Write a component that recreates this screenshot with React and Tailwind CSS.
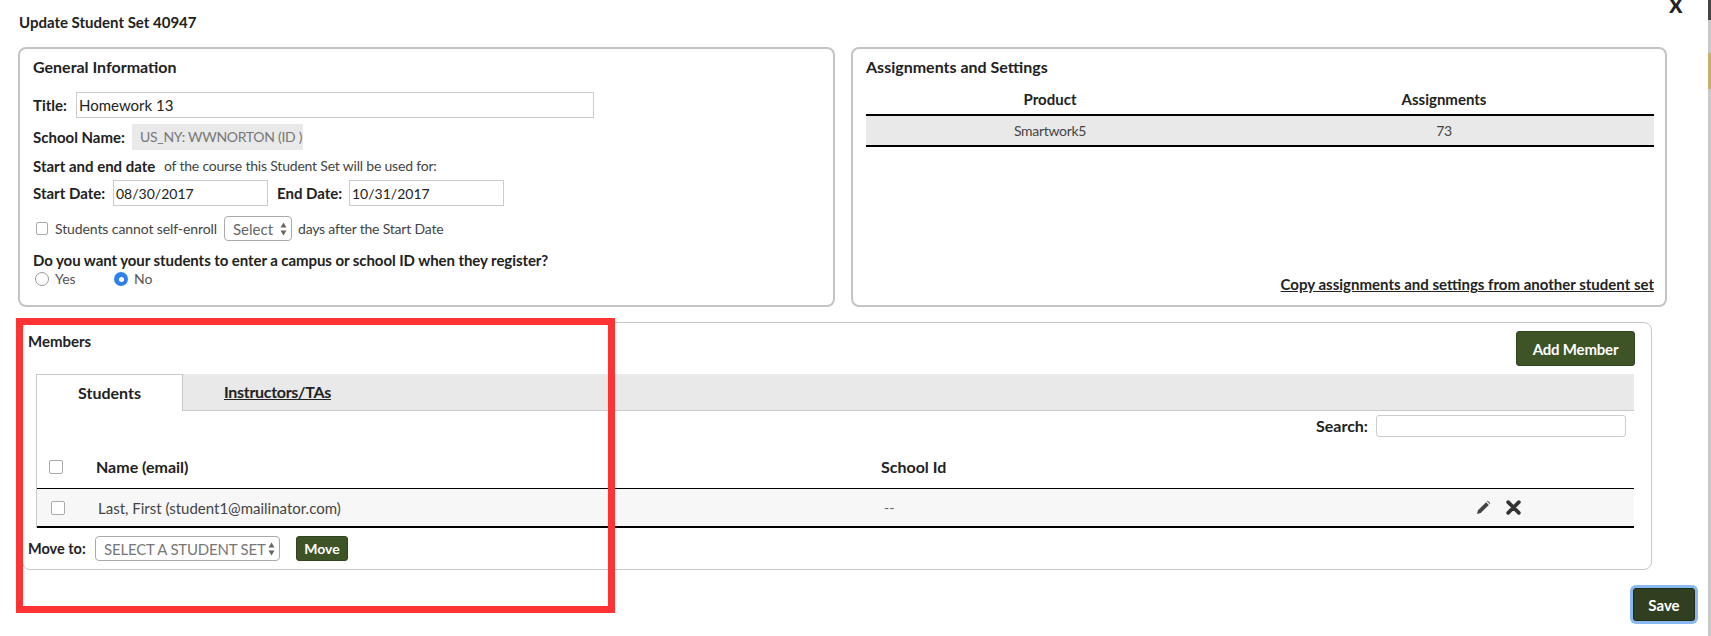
const labelCls = "font-bold text-[#222] whitespace-nowrap shrink-0";
const inputCls = "border border-[#ccc] bg-white text-[#222] px-[2px] outline-none";

function Arrows() {
  return (
    <svg width="7" height="14" viewBox="0 0 7 14" className="shrink-0">
      <path d="M3.5 0.5 L6.5 5.5 L0.5 5.5 Z M3.5 13.5 L0.5 8.5 L6.5 8.5 Z" fill="#666" />
    </svg>
  );
}

function Check({ className }) {
  return <span className={"block w-[14px] h-[14px] shrink-0 border border-[#aaa] rounded-[2px] bg-white " + (className || "")} />;
}

export default function App() {
  return (
    <div className="relative w-[1711px] h-[636px] overflow-hidden bg-white font-['Lato','Liberation_Sans',sans-serif] text-[15px] leading-[18px] text-[#333] pl-[18px]">
      <div className="h-[47px] pt-[13px] pl-[1px] font-bold text-[#222]">Update Student Set 40947</div>

      <div className="flex gap-[16px] h-[260px]">
        <section className="w-[817px] h-full border-2 border-[#c4c4c4] rounded-[8px] pl-[13px] pt-[6px]">
          <h2 className="font-bold text-[#222] text-[16px] h-[37px] pt-[3px]">General Information</h2>
          <div className="flex items-center h-[26px]">
            <span className={labelCls + " w-[43px]"}>Title:</span>
            <input readOnly value="Homework 13" className={inputCls + " w-[518px] h-[26px] text-[15px]"} />
          </div>
          <div className="flex items-center h-[26px] mt-[6px]">
            <span className={labelCls + " w-[99px]"}>School Name:</span>
            <span className="h-[26px] w-[171px] bg-[#e9e9e9] text-[#777] pl-[8px] flex items-center whitespace-nowrap text-[14px] tracking-[-0.3px]">US_NY: WWNORTON (ID )</span>
          </div>
          <div className="flex items-center h-[18px] mt-[7px]">
            <span className={labelCls + " w-[131px]"}>Start and end date</span>
            <span className="text-[#444] text-[14px] tracking-[-0.2px] whitespace-nowrap">of the course this Student Set will be used for:</span>
          </div>
          <div className="flex items-center h-[26px] mt-[5px]">
            <span className={labelCls + " w-[80px]"}>Start Date:</span>
            <input readOnly value="08/30/2017" className={inputCls + " w-[155px] h-[26px] text-[14px]"} />
            <span className={labelCls + " ml-[9px] w-[72px]"}>End Date:</span>
            <input readOnly value="10/31/2017" className={inputCls + " w-[155px] h-[26px] text-[14px]"} />
          </div>
          <div className="flex items-center h-[25px] mt-[10px] pl-[3px] text-[14px]">
            <Check className="!w-[12px] !h-[13px]" />
            <span className="ml-[7px] text-[#444] w-[169px] whitespace-nowrap tracking-[-0.1px]">Students cannot self-enroll</span>
            <span className="w-[68px] h-[25px] border border-[#aaa] rounded-[4px] flex items-center justify-between pl-[8px] pr-[4px] text-[#666] text-[15px]">
              Select <Arrows />
            </span>
            <span className="ml-[6px] text-[#444] whitespace-nowrap tracking-[-0.2px]">days after the Start Date</span>
          </div>
          <div className="font-bold text-[#222] mt-[10px] h-[18px] whitespace-nowrap tracking-[-0.07px]">Do you want your students to enter a campus or school ID when they register?</div>
          <div className="flex items-center h-[18px] mt-[1px] text-[#555] text-[14px]">
            <span className="w-[14px] h-[14px] rounded-full border border-[#999] bg-white ml-[2px]" />
            <span className="ml-[6px] w-[59px]">Yes</span>
            <span className="w-[14px] h-[14px] rounded-full bg-[#2f80ed] flex items-center justify-center">
              <span className="w-[5px] h-[5px] rounded-full bg-white" />
            </span>
            <span className="ml-[6px]">No</span>
          </div>
        </section>

        <section className="w-[816px] h-full border-2 border-[#c4c4c4] rounded-[8px] pl-[13px] pr-[11px] pt-[6px] flex flex-col">
          <h2 className="font-bold text-[#222] text-[16px] h-[36px] pt-[3px]">Assignments and Settings</h2>
          <div className="grid grid-cols-[368px_1fr] h-[23px] font-bold text-[#222] text-center -mt-[1px] mb-[1px]">
            <span>Product</span>
            <span>Assignments</span>
          </div>
          <div className="grid grid-cols-[368px_1fr] items-center h-[33px] bg-[#e9e9e9] border-y-2 border-black text-center text-[#444] text-[14px] tracking-[-0.3px]">
            <span>Smartwork5</span>
            <span>73</span>
          </div>
          <div className="mt-auto mb-[12px] text-right font-bold text-[#222] underline whitespace-nowrap">Copy assignments and settings from another student set</div>
        </section>
      </div>

      <section className="relative w-[1630px] h-[248px] ml-[4px] mt-[15px] border border-[#c8c8c8] rounded-[8px] pl-[5px]">
        <div className="flex items-start justify-between h-[51px] pr-[16px]">
          <h2 className="font-bold text-[#222] mt-[9px]">Members</h2>
          <button className="mt-[8px] w-[119px] h-[35px] rounded-[3px] border border-[#2f4420] bg-[#3e5426] text-white font-bold text-[15px] tracking-[-0.2px]">Add Member</button>
        </div>

        <div className="ml-[8px] w-[1598px] border-l border-[#c8c8c8]">
          <div className="flex h-[37px] bg-[#e9e9e9] border-b border-[#c8c8c8] font-bold text-[#222] text-[16px]">
            <div className="w-[146px] h-[37px] bg-white border-r border-t border-[#c8c8c8] flex items-center justify-center">Students</div>
            <div className="ml-[41px] h-full flex items-center underline tracking-[-0.3px]">Instructors/TAs</div>
          </div>
          <div className="flex items-center justify-end h-[22px] mt-[4px] pr-[8px] gap-[8px]">
            <span className="font-bold text-[#222] text-[16px]">Search:</span>
            <input readOnly className="w-[250px] h-[22px] border border-[#ccc] rounded-[3px] bg-white outline-none" />
          </div>
          <div className="flex items-center h-[52px] pt-[8px] font-bold text-[#222] text-[16px] border-b-[1.5px] border-black">
            <Check className="ml-[12px]" />
            <span className="ml-[33px] w-[785px]">Name (email)</span>
            <span>School Id</span>
          </div>
          <div className="flex items-center h-[39px] bg-[#f7f7f7] border-b-2 border-black text-[#444]">
            <Check className="ml-[14px]" />
            <span className="ml-[33px] w-[786px] whitespace-nowrap">Last, First (student1@mailinator.com)</span>
            <span className="text-[#666] w-[592px] text-[14px]">--</span>
            <svg viewBox="0 0 14 14" className="w-[15px] h-[15px] mb-[1px]">
              <path d="M1 13 L1.8 9.6 L9.4 2 L12 4.6 L4.4 12.2 Z M10.2 1.2 L11 0.6 L13.4 3 L12.8 3.8 Z" fill="#444" />
            </svg>
            <svg viewBox="0 0 14 14" className="w-[15px] h-[15px] ml-[15px] mb-[1px]">
              <path d="M2 2 L12 12 M12 2 L2 12" stroke="#333" strokeWidth="3.4" strokeLinecap="round" />
            </svg>
          </div>
        </div>

        <div className="flex items-center h-[25px] mt-[8px] text-[#222]">
          <span className="font-bold w-[67px] text-[14.5px] whitespace-nowrap">Move to:</span>
          <span className="w-[185px] h-[25px] border border-[#aaa] rounded-[4px] flex items-center justify-between pl-[8px] pr-[4px] text-[#777] text-[15px] tracking-[-0.2px] whitespace-nowrap">
            SELECT A STUDENT SET <Arrows />
          </span>
          <button className="ml-[16px] w-[52px] h-[25px] rounded-[3px] border border-[#2f4420] bg-[#3e5426] text-white font-bold text-[14px]">Move</button>
        </div>
      </section>

      <div className="flex justify-end w-[1677px] mt-[18px]">
        <button className="w-[62px] h-[33px] rounded-[3px] bg-[#2f3f20] border border-[#1f2d14] ring-[3px] ring-[#8ab8f0] text-white font-bold">Save</button>
      </div>

      <span className="absolute left-[1669px] top-[-9px] text-[#222] font-bold text-[26px] leading-[24px]">x</span>
      <span className="absolute right-[0px] top-0 bottom-0 w-[3px] bg-[#c8c8c8]" />
      <span className="absolute right-[0px] top-0 h-[20px] w-[3px] bg-[#444]" />
      <span className="absolute right-[0px] top-[53px] h-[36px] w-[3px] bg-[#c9ad6a]" />
      <span className="absolute left-[16px] top-[318px] w-[599px] h-[295px] border-[7px] border-[#ff3333] pointer-events-none" />
    </div>
  );
}
